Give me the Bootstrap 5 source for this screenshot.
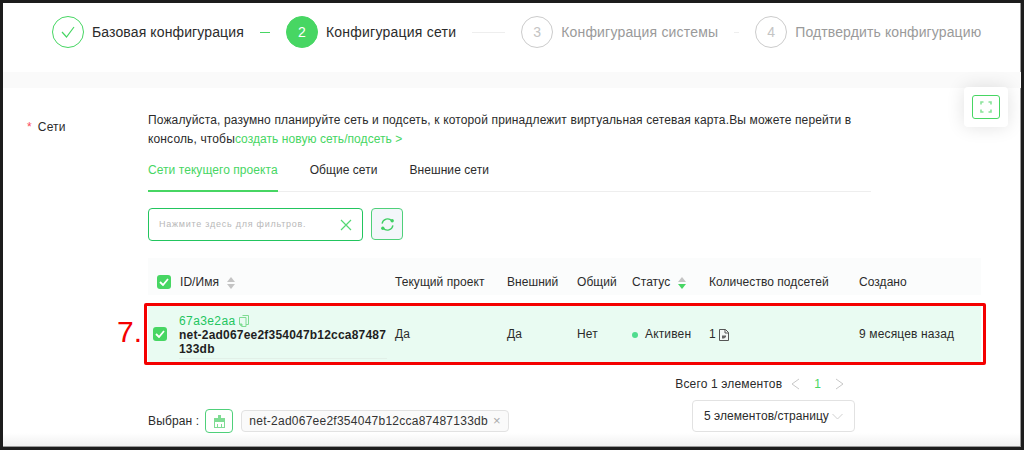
<!doctype html>
<html lang="ru"><head><meta charset="utf-8"><title>Сети</title>
<link href="https://cdn.jsdelivr.net/npm/bootstrap@5.3.0/dist/css/bootstrap.min.css" rel="stylesheet">
<style>
:root{--g:#47d663;--g2:#22c55e}
html,body{margin:0;background:#fff}
body{font-family:"Liberation Sans",Arial,sans-serif;color:#2b2b2b;font-size:12px;letter-spacing:.15px;width:1024px;height:450px;overflow:hidden}
.frame{width:1024px;height:450px;border:3px solid #1c1c1c;position:relative;overflow:hidden;background:linear-gradient(#fff calc(100% - 14px),#efefef);box-shadow:inset -1px -1px 0 #999}
.stepbar{height:69px;padding-left:49px;padding-top:13px;font-size:14px;letter-spacing:.12px}
.stepnum{width:32px;height:32px;border-radius:50%;border:1px solid #ccc;color:#c4c4c4;font-size:14px;flex:none}
.stepnum.done{border-color:var(--g)}
.stepnum.now{background:var(--g);border-color:var(--g);color:#fff}
.steptxt{margin:0 16px 0 8px;line-height:32px;white-space:nowrap}
.steptxt.s2{letter-spacing:.23px}
.steptxt.s3{letter-spacing:.18px}
.stepmuted{color:#9a9a9a}
.stepline{height:1px;background:#eee;flex:none;margin:16px 16px 0 0}
.stepline.on{background:var(--g)}
.ln1{width:10px}.ln2{width:33px}.ln3{width:5px}
.band{height:16px;background:#fafafa}
.formarea{padding-top:23px;padding-left:24px}
.lab{width:121px;flex:none;padding-top:8px;line-height:16px}
.lab i{color:#fa4a5c;font-style:normal;margin-right:6px}
.main{width:723px;flex:none;position:relative}
.intro{line-height:19px;margin:0;width:720px;white-space:nowrap;letter-spacing:.14px}
.green{color:var(--g)}
.intro .green{letter-spacing:.06px}
.tabsrow{margin-top:10px;height:33px;border-bottom:1px solid #eee;letter-spacing:.06px}
.tabitem{height:33px;line-height:22px;margin-right:32px}
.tabitem.act{color:var(--g);border-bottom:2px solid var(--g)}
.toolrow{margin-top:16px;height:33px}
.filt{width:215px;height:33px;border:1.5px solid var(--g2);border-radius:4px;padding:0 10px;font-size:9px;letter-spacing:.75px;color:#b8b8b8}
.refbtn{width:32px;height:32px;border:1.5px solid #4fd07a;border-radius:4px;background:#f3f6fa;padding:0}
.tblwrap{position:relative;margin-top:17px;width:833px}
.datat{table-layout:fixed;width:833px;margin:0;border-collapse:separate;border-spacing:0;--bs-table-bg:transparent;font-size:12px}
.datat th,.datat td{padding:0 4px;border:0;font-weight:400;vertical-align:middle;color:#2b2b2b;box-shadow:none}
.datat thead th{height:37px;background:#fbfcfc;padding-top:11px;letter-spacing:.05px}
.c1{width:28px}.c2{width:215px}.c3{width:112px}.c4{width:70px}.c5{width:55px}.c6{width:77px}.c7{width:150px}.c8{width:126px}
.spacer td{height:10px;padding:0!important}
.datat tbody tr.sel td{background:#e9fbf2;height:58px}
.cb{width:14px;height:14px;border-radius:3px;background:var(--g);display:block}
.cbhead{margin-left:5px}
.cbrow{margin-left:1px}
.idc{line-height:14px;padding-bottom:2px;border-bottom:1px solid #e2f0e8;margin:4px 0 0 -1px}
.idc b{display:block;word-break:break-all;letter-spacing:.2px;color:#1f1f1f;line-height:14px}
.idnum{color:#22c55e;letter-spacing:.4px}
.sorter{display:inline-flex;flex-direction:column;gap:2px;margin-left:8px;vertical-align:middle}
.up{width:0;height:0;border:4px solid transparent;border-top:0;border-bottom:5px solid #c4c4c4}
.dn{width:0;height:0;border:4px solid transparent;border-bottom:0;border-top:5px solid #c4c4c4}
.dn.on{border-top-color:var(--g)}
.dot{width:6px;height:6px;background:#4fdc8e;border-radius:50%;display:inline-block;margin-right:7px}
.redbox{position:absolute;left:-4px;top:45px;width:842px;height:62px;border:3px solid #f40000;border-radius:2px;pointer-events:none}
.seven{position:absolute;left:-31px;top:56px;font-size:30px;line-height:36px;color:#f40000;letter-spacing:0}
.footrow{width:707px;margin-top:13px}
.chosen{margin-bottom:-1px}
.brushbtn{width:28px;height:24px;border:1.5px solid #4fd07a;border-radius:4px;background:#fff;margin:0 8px 0 6px;padding:0}
.tagx{height:22px;border:1px solid #e2e2e2;background:#fafafa;border-radius:4px;padding:0 7px;white-space:nowrap;color:#333;letter-spacing:.25px}
.tagx span{color:#aaa;margin-left:5px;font-size:13px;letter-spacing:0}
.pgr{margin-right:10px;height:16px}
.pageselect{width:163px;height:32px;border:1px solid #e2e2e2;border-radius:4px;margin-top:8px;padding:0 11px;white-space:nowrap;letter-spacing:.05px;background:#fff}
.fsbox{position:absolute;right:13px;top:84px;width:44px;height:40px;background:#fff;border-radius:4px;box-shadow:0 0 18px rgba(0,0,0,.12)}
.fsbtn{width:28px;height:24px;border:1.5px solid var(--g);border-radius:3px;background:#fff;padding:0}
</style></head><body>
<div class="frame">
 <div class="stepbar d-flex align-items-start">
  <div class="stepnum done d-flex align-items-center justify-content-center"><svg width="16" height="14" viewBox="0 0 16 14"><path d="M2 7l4.500 5L14 2" fill="none" stroke="#47d663" stroke-width="1.2"/></svg></div>
  <div class="steptxt">Базовая конфигурация</div>
  <div class="stepline on ln1"></div>
  <div class="stepnum now d-flex align-items-center justify-content-center">2</div>
  <div class="steptxt s2">Конфигурация сети</div>
  <div class="stepline ln2"></div>
  <div class="stepnum d-flex align-items-center justify-content-center">3</div>
  <div class="steptxt s3 stepmuted">Конфигурация системы</div>
  <div class="stepline ln3"></div>
  <div class="stepnum d-flex align-items-center justify-content-center">4</div>
  <div class="steptxt stepmuted">Подтвердить конфигурацию</div>
 </div>
 <div class="band"></div>
 <div class="fsbox d-flex align-items-center justify-content-center"><button class="fsbtn d-flex align-items-center justify-content-center" aria-label="Во весь экран"><svg width="12" height="12" viewBox="0 0 12 12"><path d="M1 3.500V1h2.500M8.500 1H11v2.500M11 8.500V11H8.500M3.500 11H1V8.500" fill="none" stroke="#8be39b" stroke-width="1.6"/></svg></button></div>
 <div class="formarea d-flex">
  <div class="lab"><i>*</i>Сети</div>
  <div class="main">
   <p class="intro">Пожалуйста, разумно планируйте сеть и подсеть, к которой принадлежит виртуальная сетевая карта.Вы можете перейти в<br>консоль, чтобы<span class="green">создать новую сеть/подсеть &gt;</span></p>
   <div class="tabsrow d-flex">
    <div class="tabitem act">Сети текущего проекта</div><div class="tabitem">Общие сети</div><div class="tabitem">Внешние сети</div>
   </div>
   <div class="toolrow d-flex gap-2">
    <div class="filt d-flex align-items-center justify-content-between"><span>Нажмите здесь для фильтров.</span><svg width="12" height="12" viewBox="0 0 12 12"><path d="M1 1l10 10M11 1L1 11" stroke="#55d873" stroke-width="1.2"/></svg></div>
    <button class="refbtn d-flex align-items-center justify-content-center" aria-label="Обновить"><svg width="15" height="15" viewBox="0 0 16 16" fill="none" stroke="#3fcf63" stroke-width="1.4"><path d="M2.200 7a6 6 0 0 1 10.400-3"/><path d="M13.800 9a6 6 0 0 1-10.400 3"/><circle cx="13" cy="4" r="1.800" fill="#3fcf63" stroke="none"/><circle cx="3" cy="12" r="1.800" fill="#3fcf63" stroke="none"/></svg></button>
   </div>
   <div class="tblwrap">
    <table class="table datat">
     <colgroup><col class="c1"><col class="c2"><col class="c3"><col class="c4"><col class="c5"><col class="c6"><col class="c7"><col class="c8"></colgroup>
     <thead><tr>
      <th><span class="cb cbhead d-flex align-items-center justify-content-center"><svg width="10" height="8" viewBox="0 0 10 8"><path d="M1 4l3 3 5-6" fill="none" stroke="#fff" stroke-width="1.8"/></svg></span></th>
      <th>ID/Имя<span class="sorter"><span class="up"></span><span class="dn"></span></span></th>
      <th>Текущий проект</th><th>Внешний</th><th>Общий</th>
      <th>Статус<span class="sorter"><span class="up"></span><span class="dn on"></span></span></th>
      <th>Количество подсетей</th><th>Создано</th>
     </tr></thead>
     <tbody>
      <tr class="spacer"><td colspan="8"></td></tr>
      <tr class="sel">
       <td><span class="cb cbrow d-flex align-items-center justify-content-center"><svg width="10" height="8" viewBox="0 0 10 8"><path d="M1 4l3 3 5-6" fill="none" stroke="#fff" stroke-width="1.8"/></svg></span></td>
       <td><div class="idc"><span class="idnum">67a3e2aa</span> <svg width="10" height="12" viewBox="0 0 10 12" fill="none" stroke="#7fdc93"><path d="M3.500.5h6v9H7M.5 2.500h6.500v9H3l-2.500-2.500z"/><path d="M.5 9H3v2.500z" fill="#7fdc93"/></svg><b>net-2ad067ee2f354047b12cca87487133db</b></div></td>
       <td>Да</td><td>Да</td><td>Нет</td>
       <td class="text-nowrap"><span class="dot"></span>Активен</td>
       <td>1 <svg width="10" height="12" viewBox="0 0 10 12" fill="#f4f8f6" stroke="#555"><path d="M.5.5h6l3 3v8H.5z"/><path d="M3 6.500h4v1.500l-2 1.500H3z" fill="#666" stroke="none"/><path d="M6 .5V4h3.500" fill="none"/></svg></td>
       <td>9 месяцев назад</td>
      </tr>
     </tbody>
    </table>
    <div class="redbox"></div>
    <div class="seven">7.</div>
   </div>
   <div class="footrow d-flex justify-content-between">
    <div class="chosen d-flex align-items-center align-self-end">Выбран :<button class="brushbtn d-flex align-items-center justify-content-center" aria-label="Очистить"><svg width="11" height="13" viewBox="0 0 11 13"><rect x="4" y="0" width="3" height="4" fill="#7fdc93"/><rect x=".5" y="3.500" width="10" height="9" fill="none" stroke="#7fdc93"/><rect x="1" y="4" width="9" height="3" fill="#7fdc93"/><path d="M3.500 9v3.500M7.500 9v3.500" stroke="#7fdc93"/></svg></button><div class="tagx d-flex align-items-center">net-2ad067ee2f354047b12cca87487133db<span>×</span></div></div>
    <div class="d-flex flex-column align-items-end">
     <div class="pgr d-flex align-items-center">Всего 1 элементов
      <svg class="ms-2" width="12" height="12" viewBox="0 0 12 12" fill="none" stroke="#c8c8c8"><path d="M9 1L2 6l7 5"/></svg>
      <span class="green mx-2 px-1">1</span>
      <svg width="12" height="12" viewBox="0 0 12 12" fill="none" stroke="#c8c8c8"><path d="M3 1l7 5-7 5"/></svg>
     </div>
     <div class="pageselect d-flex align-items-center justify-content-between">5 элементов/страницу<svg width="11" height="7" viewBox="0 0 11 7" fill="none" stroke="#d0d0d0"><path d="M.5 1L5.500 6l5-5"/></svg></div>
    </div>
   </div>
  </div>
 </div>
</div>
<script src="https://cdn.jsdelivr.net/npm/bootstrap@5.3.0/dist/js/bootstrap.bundle.min.js"></script>
</body></html>
